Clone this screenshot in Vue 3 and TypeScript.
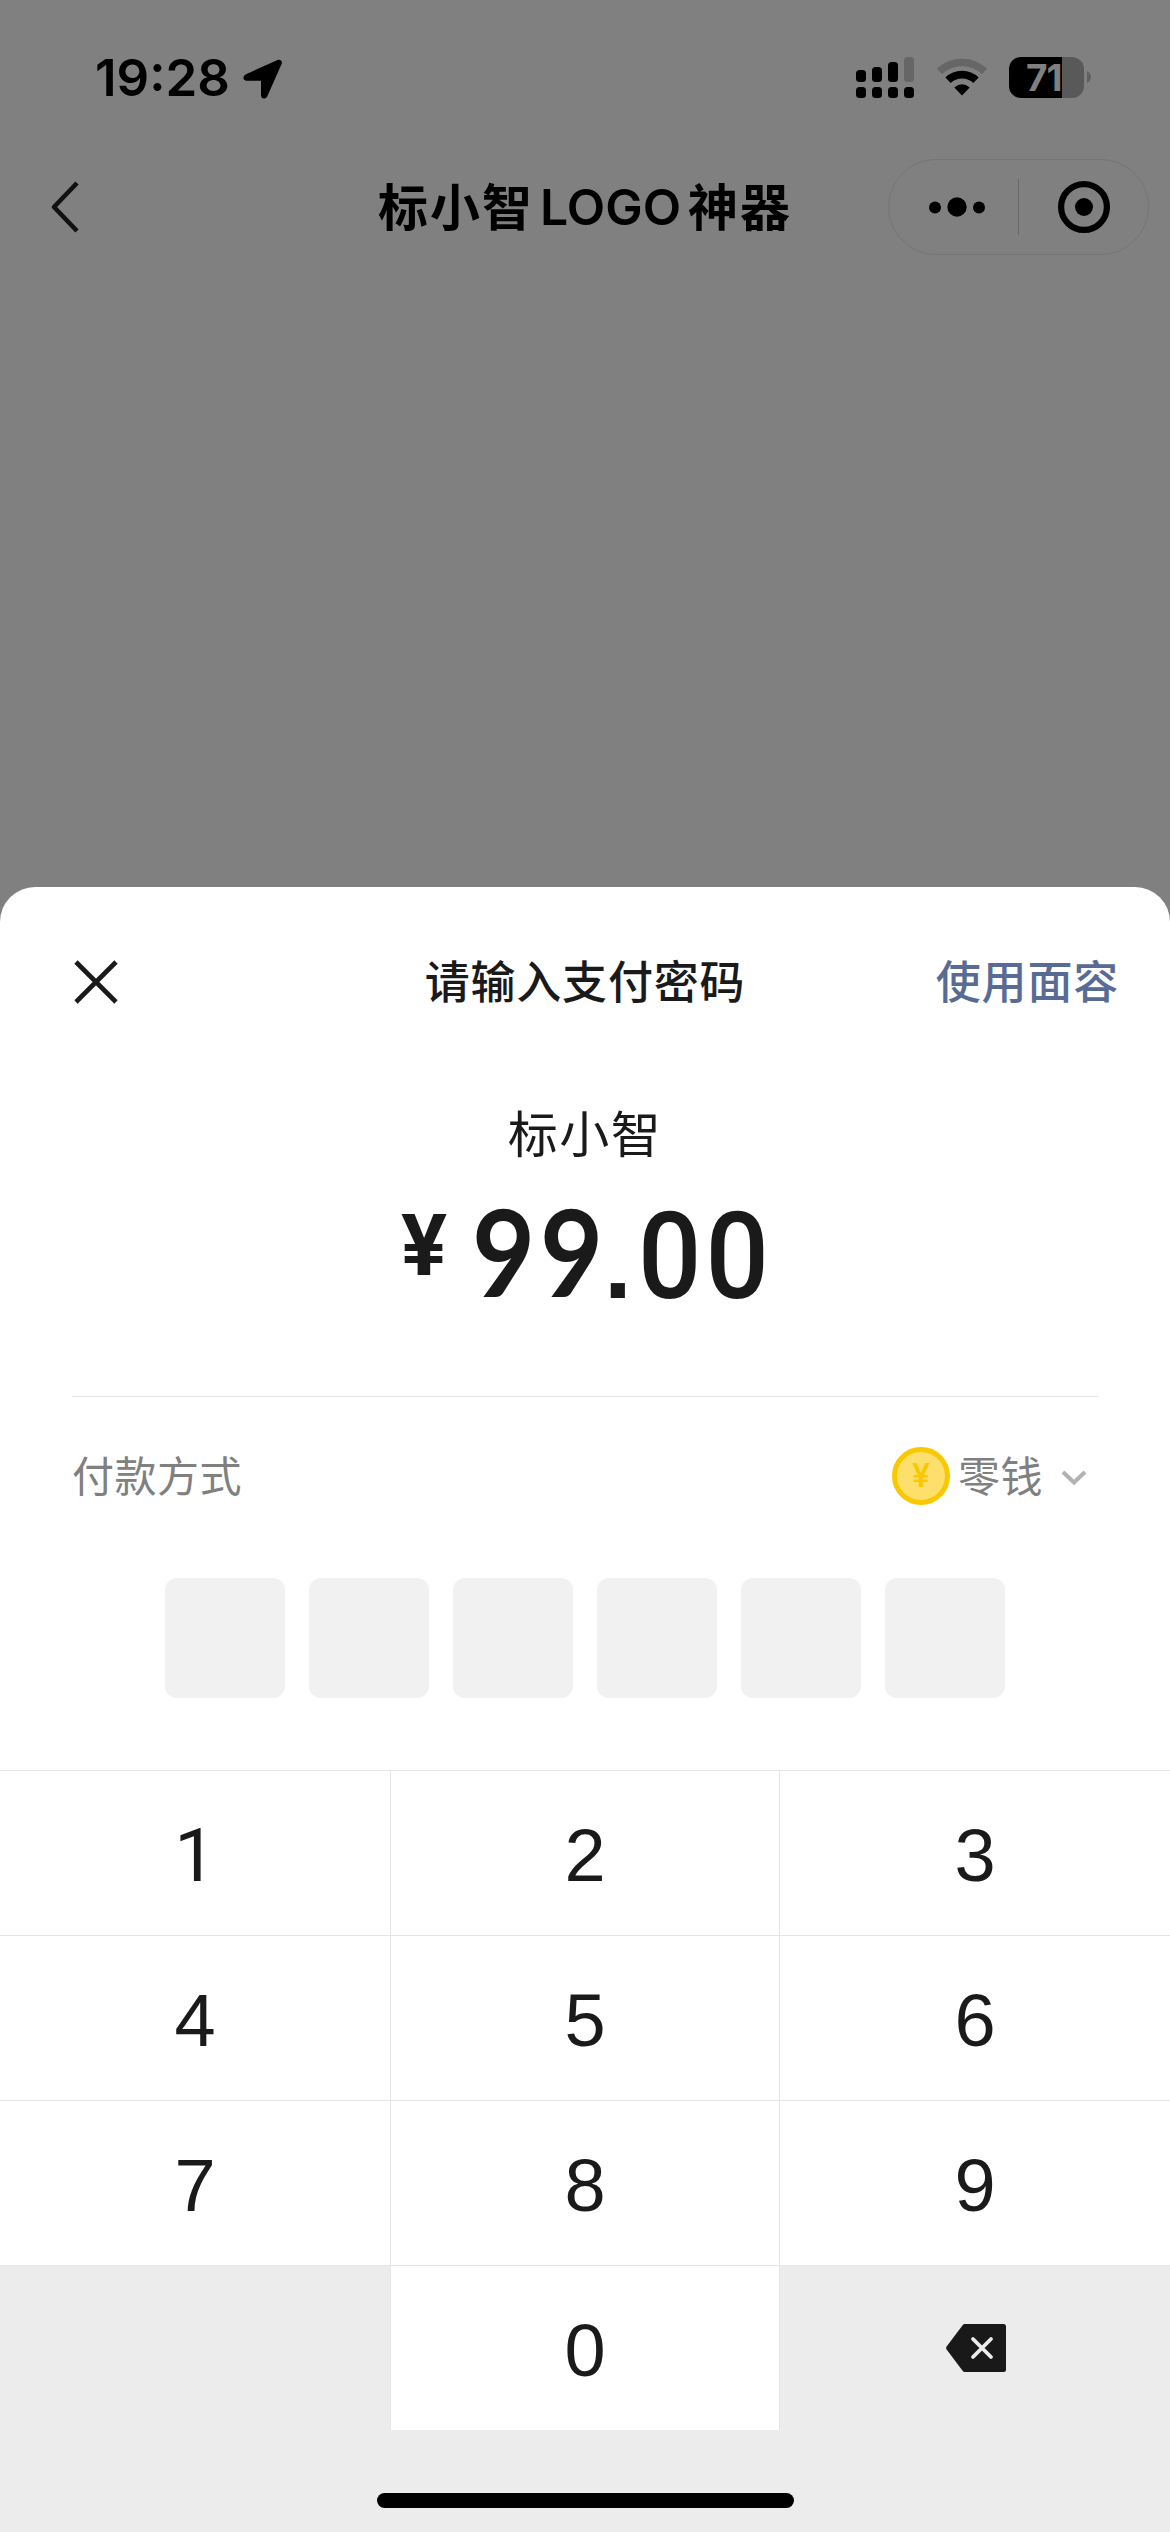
<script setup lang="ts">
const digitRows: string[][] = [
  ['1', '2', '3'],
  ['4', '5', '6'],
  ['7', '8', '9'],
]
const passwordLength = 6
</script>

<template>
  <div class="screen">
    <header class="status">
      <span class="time">19:28</span>
      <svg class="location" width="40" height="40" viewBox="0 0 40 40">
        <path d="M34.5 1 L3 15.2 C-1 17.2 0 21.8 3.5 21.8 H18 V36.5 C18 40 22.5 40.4 24.2 37.4 L38.6 5 C39.8 2 37.5 -0.3 34.5 1Z" />
      </svg>
      <svg class="signal" width="58" height="41" viewBox="0 0 58 41">
        <rect x="0" y="13" width="10" height="12" rx="3.5" />
        <rect x="16" y="10" width="10" height="15" rx="3.5" />
        <rect x="32" y="5" width="10" height="20" rx="3.5" />
        <rect x="48" y="0" width="10" height="25" rx="3.5" fill="#666" />
        <rect v-for="i in 4" :key="i" :x="(i - 1) * 16" y="30" width="10" height="11" rx="3.5" />
      </svg>
      <svg class="wifi" width="52" height="40" viewBox="0 0 52 40">
        <path d="M3.5 13.4 A33 33 0 0 1 48.5 13.4" fill="none" stroke="#666" stroke-width="7.6" />
        <path d="M12 22.3 A20.2 20.2 0 0 1 40 22.3" fill="none" stroke="#000" stroke-width="7.6" />
        <path d="M18.3 29.6 Q26 23 33.7 29.6 L26 37.5Z" />
      </svg>
      <div class="battery"><span>71</span></div>
      <svg class="battery-tip" width="4" height="12" viewBox="0 0 4 12"><path d="M0 0 Q4 2 4 6 Q4 10 0 12Z" fill="#606060" /></svg>
    </header>

    <nav class="nav">
      <svg class="back" width="30" height="52" viewBox="0 0 30 52">
        <path d="M27 2 L4 26 L27 50" fill="none" stroke="#111" stroke-width="4.6" stroke-linejoin="round" />
      </svg>
      <h1 class="nav-title"><span>标小智</span><span class="latin">LOGO</span><span>神器</span></h1>
      <div class="capsule">
        <svg width="56" height="20" viewBox="0 0 56 20" class="more">
          <circle cx="6" cy="10.5" r="6" /><circle cx="28" cy="10" r="9.7" /><circle cx="50" cy="10.5" r="6" />
        </svg>
        <i class="capsule-line"></i>
        <svg width="52" height="52" viewBox="0 0 52 52" class="target">
          <circle cx="26" cy="26" r="22.9" fill="none" stroke="#000" stroke-width="6.2" /><circle cx="26" cy="26" r="9" />
        </svg>
      </div>
    </nav>

    <section class="sheet">
      <div class="sheet-head">
        <svg class="close" width="44" height="44" viewBox="0 0 44 44">
          <path d="M2 2 L42 42 M42 2 L2 42" stroke="#1a1a1a" stroke-width="4.6" />
        </svg>
        <h2>请输入支付密码</h2>
        <a class="face">使用面容</a>
      </div>
      <div class="payee">标小智</div>
      <div class="amount"><span class="yen">¥</span><span class="nine">9</span><span class="nine">9</span><span class="point">.</span><span class="cents">00</span></div>

      <div class="method">
        <span class="label">付款方式</span>
        <span class="coin">¥</span>
        <span class="wallet">零钱</span>
        <svg class="chevron" width="26" height="16" viewBox="0 0 26 16">
          <path d="M2 2 L13 12.5 L24 2" fill="none" stroke="#b2b2b2" stroke-width="4" />
        </svg>
      </div>

      <div class="password"><i v-for="i in passwordLength" :key="i"></i></div>

      <div class="keypad">
        <template v-for="row in digitRows" :key="row[0]">
          <div v-for="digit in row" :key="digit" class="key" :class="{ one: digit === '1' }"><span>{{ digit }}</span></div>
        </template>
        <div class="key blank"></div>
        <div class="key"><span>0</span></div>
        <div class="key blank">
          <svg class="delete" width="60" height="48" viewBox="0 0 60 48">
            <path d="M18.5 0 H57.5 Q60 0 60 2.5 V45.5 Q60 48 57.5 48 H18.5 Q17.5 48 16.8 47.1 L0.6 25.5 Q-0.3 24 0.6 22.5 L16.8 0.9 Q17.5 0 18.5 0Z" fill="#191919" />
            <path d="M27 15 L45 33 M45 15 L27 33" stroke="#ececec" stroke-width="3.8" stroke-linecap="round" />
          </svg>
        </div>
      </div>
      <footer class="home"><i></i></footer>
    </section>
  </div>
</template>

<style>
body { margin: 0; }
</style>

<style scoped>
.screen {
  width: 1170px;
  height: 2532px;
  overflow: hidden;
  display: flex;
  flex-direction: column;
  background: #808080;
  color: #1a1a1a;
  font-family: "Noto Sans CJK SC", sans-serif;
}
h1, h2 { margin: 0; }
svg { display: block; flex: none; }
.status {
  height: 159px;
  display: flex;
  align-items: flex-start;
  color: #000;
}
.time {
  width: 148px;
  margin: 48px 0 0 95px;
  font: 600 51px/60px Inter, sans-serif;
  white-space: nowrap;
}
.location { margin-top: 59px; }
.signal { margin: 57px 0 0 573px; }
.wifi { margin: 58px 0 0 21.5px; }
.battery {
  width: 75px;
  height: 41px;
  margin: 57px 0 0 21.5px;
  border-radius: 12px;
  background: linear-gradient(to right, #000 53px, #595959 53px);
}
.battery span {
  display: block;
  padding-left: 17px;
  color: #808080;
  font: 700 37px/42px Inter, sans-serif;
  letter-spacing: -1px;
  white-space: nowrap;
}
.battery-tip { margin: 71px 0 0 3px; }
.nav {
  height: 96px;
  display: grid;
  grid-template-columns: 282px 1fr 282px;
  align-items: center;
}
.back { margin-left: 50px; }
.nav-title {
  height: 96px;
  display: flex;
  justify-content: center;
  color: #000;
  font-size: 50px;
  font-weight: 700;
  line-height: 90px;
  letter-spacing: 2px;
  white-space: nowrap;
}
.nav-title .latin {
  margin: 0 7px 0 6px;
  font-family: Inter, sans-serif;
  font-weight: 600;
  line-height: 97px;
  letter-spacing: 0;
}
.capsule {
  width: 261px;
  height: 96px;
  box-sizing: border-box;
  border: 1px solid #757575;
  border-radius: 48px;
  display: flex;
  align-items: center;
}
.more { margin-left: 40px; }
.capsule-line { width: 1px; height: 56px; margin: 0 39px 0 33px; background: #696969; }
.sheet {
  height: 1645px;
  margin-top: 632px;
  border-radius: 35px 35px 0 0;
  overflow: hidden;
  background: #fff;
}
.sheet-head {
  height: 190px;
  display: grid;
  grid-template-columns: 1fr 340px 1fr;
  align-items: center;
}
.close { margin-left: 74px; }
.sheet-head h2, .face {
  height: 66px;
  font-size: 45px;
  font-weight: 500;
  line-height: 62px;
  letter-spacing: 0.8px;
  text-align: center;
  white-space: nowrap;
}
.sheet-head .face { color: #576b95; text-align: right; margin-right: 51px; }
.payee {
  height: 114px;
  line-height: 109px;
  font-size: 50px;
  letter-spacing: 1.5px;
  text-align: center;
}
.amount {
  height: 205px;
  margin-left: 401px;
  display: flex;
  align-items: flex-start;
}
.yen { width: 71px; font: 700 86px/109px Roboto, sans-serif; }
.nine {
  width: 68px;
  font: 700 121px/120px Lato, sans-serif;
  transform: scaleX(0.9);
  transform-origin: left;
}
.nine + .nine { width: 64px; }
.point { width: 34px; font: 700 100px/145px "Liberation Sans", sans-serif; }
.cents {
  font: 500 120px/132px Roboto, sans-serif;
  letter-spacing: 4.4px;
  transform: scaleX(0.93);
  transform-origin: left;
}
.method {
  height: 181px;
  margin: 0 72px;
  border-top: 1px solid #e5e5e5;
  display: flex;
  align-items: flex-start;
  color: #808080;
  font-size: 42px;
  line-height: 60px;
}
.label { margin-top: 47px; letter-spacing: 0.5px; }
.coin {
  width: 58px;
  height: 58px;
  margin: 50px 8px 0 auto;
  box-sizing: border-box;
  border: 5px solid #fac800;
  border-radius: 50%;
  background: #fde06b;
  color: #fac800;
  font: 600 32px/48px Inter, sans-serif;
  text-align: center;
}
.wallet { margin-top: 47px; letter-spacing: 0.5px; }
.chevron { margin: 73px 11px 0 18px; }
.password {
  height: 192px;
  display: flex;
  justify-content: center;
  gap: 24px;
}
.password i { width: 120px; height: 120px; border-radius: 12px; background: #f1f1f1; }
.keypad {
  display: grid;
  grid-template-columns: 391px 389px 390px;
  grid-auto-rows: 165px;
}
.key {
  box-sizing: border-box;
  border-top: 1px solid #e5e5e5;
  border-right: 1px solid #e5e5e5;
  display: flex;
  justify-content: center;
  background: #fff;
  font: 400 74px/169px "Liberation Sans", sans-serif;
}
.key:nth-child(3n) { border-right: 0; }
.key.one { font-family: Roboto, sans-serif; }
.key.blank { background: #ececec; }
.delete { margin: 58px 0 0 2px; }
.home { height: 102px; display: flex; justify-content: center; background: #ececec; }
.home i { width: 417px; height: 15px; margin: 63px 0 0 1px; border-radius: 8px; background: #000; }
</style>
